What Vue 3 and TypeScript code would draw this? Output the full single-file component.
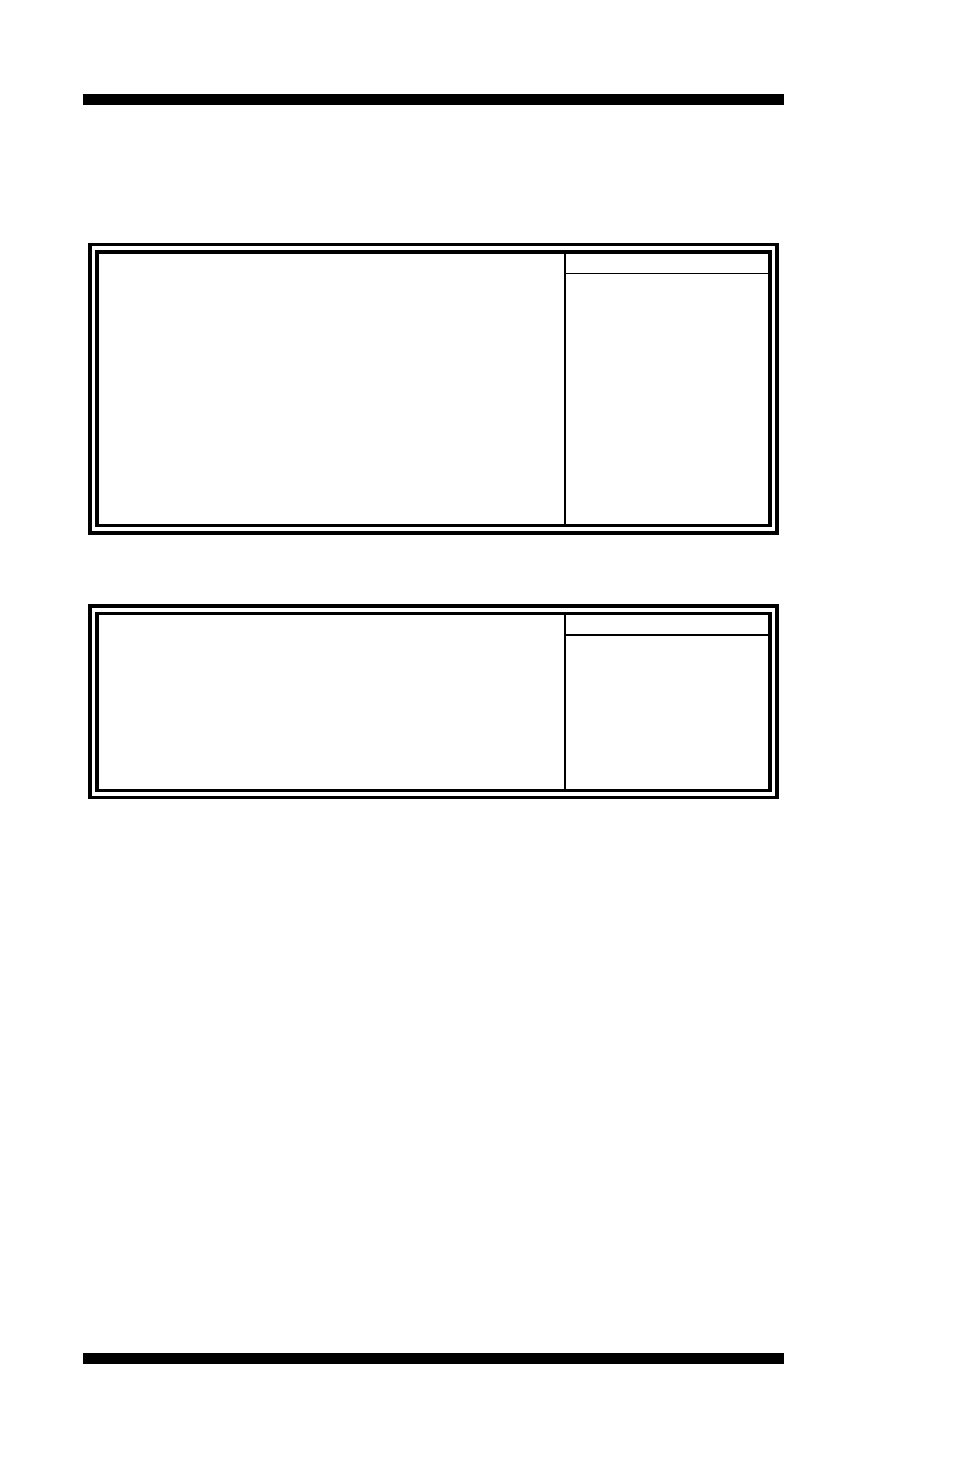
<script setup lang="ts">
interface Panel {
  id: string
  size: 'tall' | 'short'
}

const panels: Panel[] = [
  { id: 'first', size: 'tall' },
  { id: 'second', size: 'short' },
]
</script>

<template>
  <div class="page">
    <header class="rule"></header>
    <main class="content">
      <section v-for="panel in panels" :key="panel.id" class="frame" :class="panel.size">
        <div class="panel">
          <div class="items"></div>
          <aside class="help">
            <div class="help-head"></div>
            <div class="help-body"></div>
          </aside>
        </div>
      </section>
    </main>
    <footer class="rule"></footer>
  </div>
</template>

<style>
body {
  margin: 0;
  background: #fff;
}
</style>

<style scoped>
.page {
  box-sizing: border-box;
  display: flex;
  flex-direction: column;
  min-height: 100vh;
  padding: 94px 170px 111px 83px;
  font-family: "Liberation Sans", Arial, sans-serif;
}

.rule {
  flex: none;
  height: 11px;
  background: #000;
}

.content {
  flex: 1;
  display: flex;
  flex-direction: column;
  gap: 69px;
  padding: 138px 5px 0;
}

/* Double border: an outer line, a white gap and an inner line */
.frame {
  border: 4px solid #000;
}

.panel {
  display: grid;
  grid-template-columns: 1fr 204px;
  border: 4px solid #000;
}

.tall {
  border-top-width: 3px;
  padding: 4px 3px;
}

.tall .panel {
  min-height: 270px;
  border-bottom-width: 3px;
}

.short {
  border-bottom-width: 3px;
  padding: 4px 3px;
}

.short .panel {
  min-height: 174px;
  border-top-width: 3px;
  border-bottom-width: 3px;
}

.help {
  box-sizing: border-box;
  display: flex;
  flex-direction: column;
  border-left: 2px solid #000;
}

.help-head {
  min-height: 19px;
  border-bottom: 1px solid #000;
}

.short .help-head {
  border-bottom-width: 2px;
}

.help-body {
  flex: 1;
}
</style>
